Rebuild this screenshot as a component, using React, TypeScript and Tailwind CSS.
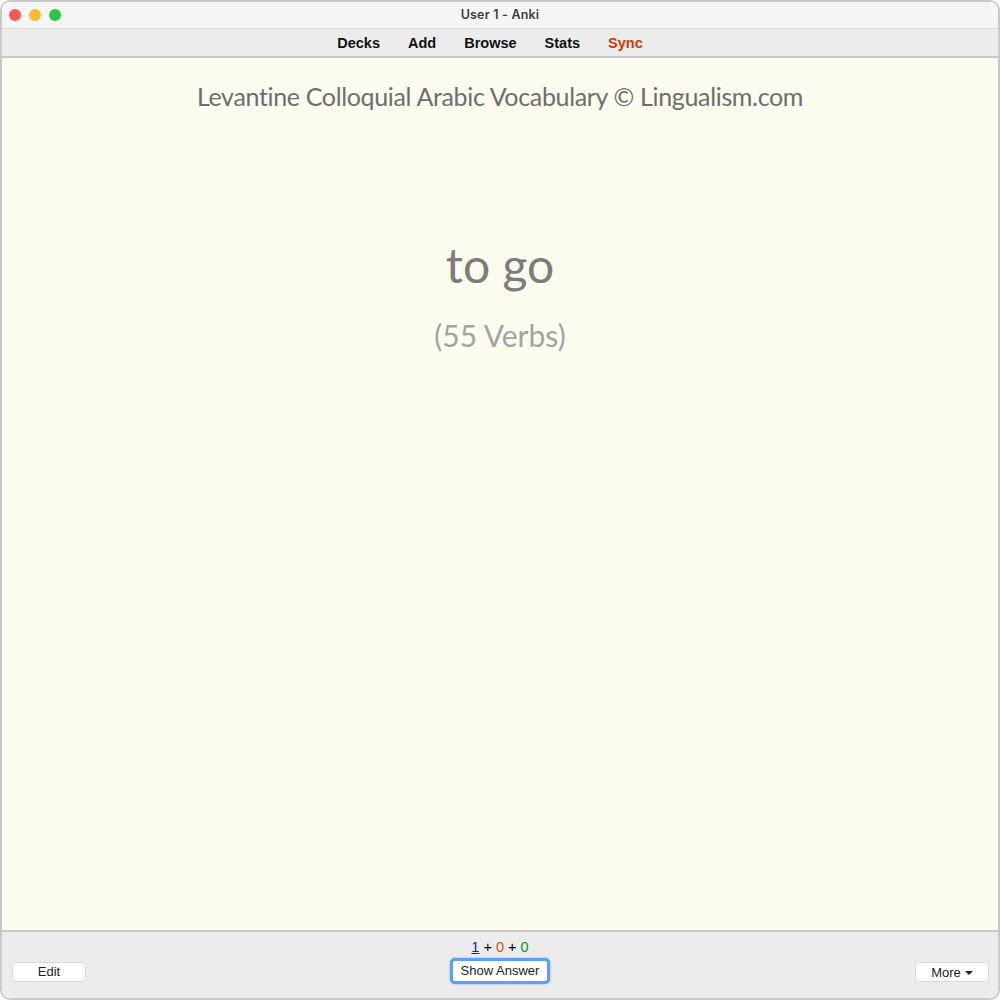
const sans = "font-['Liberation_Sans',Arial,sans-serif]";

export default function App() {
  return (
    <div className="bg-white h-[1000px] w-[1000px]">
      <div className={`flex flex-col h-full overflow-hidden rounded-[10px] border-2 border-[#c9c9c9] ${sans}`}>
        {/* Title bar */}
        <div className="relative flex items-center justify-center h-[27px] bg-[#f5f5f5] border-b border-[#dcdcdc] shrink-0">
          <div className="absolute left-[7px] top-[7px] flex gap-[8px]">
            <span className="w-3 h-3 rounded-full bg-[#fc5753]" />
            <span className="w-3 h-3 rounded-full bg-[#fdbc2e]" />
            <span className="w-3 h-3 rounded-full bg-[#28c840]" />
          </div>
          <span className="text-[12.5px] font-semibold tracking-[0.2px] text-[#3c3c3c] font-['Inter',sans-serif]">User 1 - Anki</span>
        </div>

        {/* Toolbar */}
        <div className="flex items-center justify-center gap-[28px] h-[29px] pr-[20px] pt-[3px] bg-[#ececec] border-b-2 border-[#c9c9c9] shrink-0 text-[14.5px] font-bold text-[#111]">
          <span>Decks</span>
          <span>Add</span>
          <span>Browse</span>
          <span>Stats</span>
          <span className="text-[#c93a08]">Sync</span>
        </div>

        {/* Card */}
        <div className="flex-1 flex flex-col items-center bg-[#fbfbef] font-['Lato',sans-serif] [font-variant-ligatures:none]">
          <div className="mt-[21px] text-[25px] leading-[34px] tracking-[-0.34px] text-[#6e6e6e]">
            Levantine Colloquial Arabic Vocabulary © Lingualism.com
          </div>
          <div className="mt-[120px] text-[48px] leading-[64px] text-[#7c7c7c]">to go</div>
          <div className="mt-[19px] text-[30px] leading-[38px] text-[#a3a3a3]">(55 Verbs)</div>
        </div>

        {/* Bottom bar */}
        <div className="relative h-[68px] bg-[#ececec] border-t-2 border-[#c9c9c9] shrink-0 flex items-start justify-between pl-[10px] pr-[9px]">
          <button className="mt-[30px] w-[74px] h-[20px] bg-white rounded-[4px] border border-[#d8d8d8] text-[13px] leading-[18px] text-[#222]">
            Edit
          </button>
          <div className="flex flex-col items-center mt-[7px] mr-[1px]">
            <div className="text-[14.5px] leading-[16px] text-black">
              <span className="underline text-[#1a1aa6]">1</span> + <span className="text-[#c9500f]">0</span> + <span className="text-[#0a9a0a]">0</span>
            </div>
            <button className="mt-[3px] w-[100px] h-[26px] bg-white rounded-[5px] border-[3px] border-[#5ba0f2] shadow-[0_0_2px_#5ba0f2] text-[13px] leading-[18px] text-[#222]">
              Show Answer
            </button>
          </div>
          <button className="mt-[30px] w-[74px] h-[20px] pt-[1px] bg-white rounded-[4px] border border-[#d8d8d8] text-[13px] leading-[18px] text-[#222] flex items-center justify-center gap-[4px]">
            More
            <span className="w-0 h-0 border-l-[4px] border-r-[4px] border-t-[4px] border-l-transparent border-r-transparent border-t-[#222]" />
          </button>
        </div>
      </div>
    </div>
  );
}
